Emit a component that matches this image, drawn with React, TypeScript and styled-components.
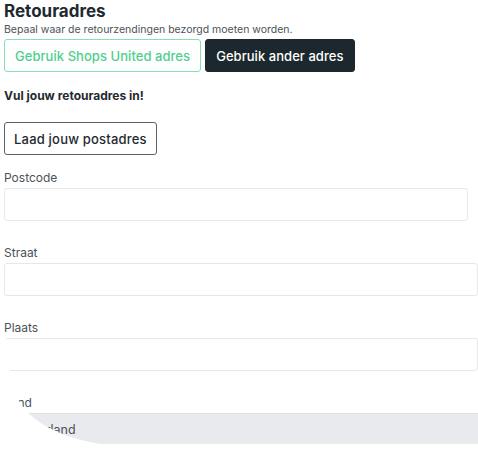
import React from 'react';
import styled, { createGlobalStyle } from 'styled-components';

const GlobalStyle = createGlobalStyle`
    html, body {
        margin: 0;
        padding: 0;
        background: #fff;
    }
    body {
        font-family: Inter, 'Open Sans', sans-serif;
        color: #1f2a30;
    }
`;

const Page = styled.div`
    position: relative;
    width: 478px;
    height: 452px;
    overflow: hidden;
    padding: 0 2px 0 4px;
    box-sizing: border-box;
`;

const Title = styled.h2`
    margin: 1px 0 0;
    font-size: 17px;
    font-weight: 700;
    line-height: 20px;
    color: #1f2a30;
`;

const Subtitle = styled.p`
    margin: 2px 0 0;
    font-size: 10.5px;
    line-height: 13px;
    color: #4b5257;
`;

const ToggleRow = styled.div`
    display: flex;
    gap: 4px;
    margin-top: 3px;
`;

const ToggleButton = styled.button<{ $active?: boolean }>`
    height: 33px;
    padding: 0 10px;
    border-radius: 3px;
    font-family: inherit;
    font-size: 13px;
    font-weight: 500;
    letter-spacing: 0.05px;
    border: 1px solid ${(p) => (p.$active ? '#1c282d' : '#86dfb5')};
    background: ${(p) => (p.$active ? '#1c282d' : '#fff')};
    color: ${(p) => (p.$active ? '#fff' : '#4fcf8e')};
`;

const Intro = styled.div`
    margin-top: 17px;
    font-size: 12px;
    font-weight: 700;
    line-height: 14px;
    color: #1f2a30;
`;

const OutlineButton = styled.button`
    margin-top: 19px;
    height: 33px;
    padding: 0 9px;
    border: 1px solid #5c6166;
    border-radius: 3px;
    background: #fff;
    font-family: inherit;
    font-size: 13px;
    font-weight: 500;
    letter-spacing: 0.2px;
    color: #1f2a30;
`;

const Form = styled.div`
    display: flex;
    flex-direction: column;
    gap: 24px;
    margin-top: 15px;
`;

const Field = styled.label<{ $narrow?: boolean }>`
    display: flex;
    flex-direction: column;
    gap: 2px;
    width: ${(p) => (p.$narrow ? '464px' : '474px')};
`;

const Label = styled.span`
    font-size: 12px;
    line-height: 16px;
    color: #4b5257;
`;

const Input = styled.input`
    height: 33px;
    box-sizing: border-box;
    border: 1px solid #e6e7e9;
    border-radius: 3px;
    background: #fff;
`;

const Select = styled.div`
    height: 32px;
    box-sizing: border-box;
    border-top: 1px solid #dfe0e4;
    background: #e9eaee;
    padding: 0 10px;
    display: flex;
    align-items: center;
    font-size: 12.5px;
    color: #4b5257;
`;

const Fade = styled.svg`
    position: absolute;
    left: 0;
    bottom: 0;
    pointer-events: none;
`;

export default function App() {
    return (
        <>
            <GlobalStyle />
            <Page>
                <Title>Retouradres</Title>
                <Subtitle>Bepaal waar de retourzendingen bezorgd moeten worden.</Subtitle>
                <ToggleRow>
                    <ToggleButton>Gebruik Shops United adres</ToggleButton>
                    <ToggleButton $active>Gebruik ander adres</ToggleButton>
                </ToggleRow>
                <Intro>Vul jouw retouradres in!</Intro>
                <OutlineButton>Laad jouw postadres</OutlineButton>
                <Form>
                    <Field $narrow>
                        <Label>Postcode</Label>
                        <Input />
                    </Field>
                    <Field>
                        <Label>Straat</Label>
                        <Input />
                    </Field>
                    <Field>
                        <Label>Plaats</Label>
                        <Input />
                    </Field>
                    <Field>
                        <Label>Land</Label>
                        <Select>Nederland</Select>
                    </Field>
                </Form>
                <Fade width="478" height="120" viewBox="0 0 478 120">
                    <path
                        d="M0 0 L6 0 C8 30 11 48 15 60 C22 80 44 102 100 112 L478 112 L478 120 L0 120 Z"
                        fill="#fff"
                    />
                </Fade>
            </Page>
        </>
    );
}
